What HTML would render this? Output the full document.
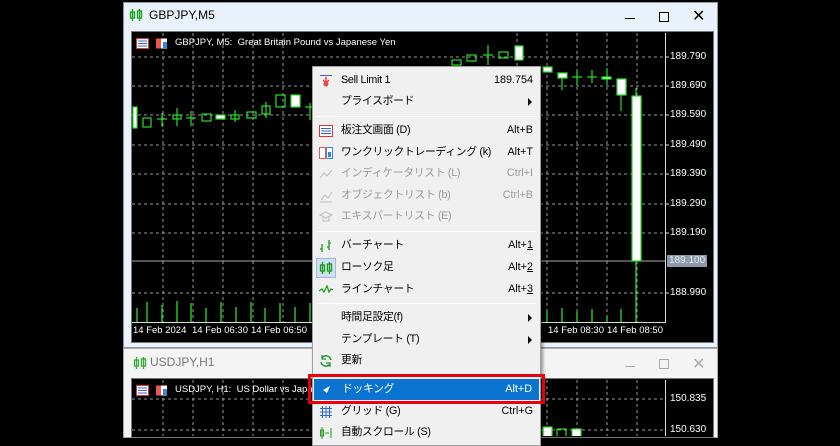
<!DOCTYPE html>
<html><head><meta charset="utf-8"><style>
*{margin:0;padding:0;box-sizing:border-box}
html,body{width:840px;height:436px}
body{background:#000;position:relative;overflow:hidden;font-family:"Liberation Sans","Noto Sans CJK JP",sans-serif}
.abs{position:absolute}
.t{position:absolute;font-size:11px;color:#fff;white-space:nowrap}
.menu{position:absolute;left:312px;top:66px;width:229px;height:380px;background:#f0f0f0;border:1px solid #a0a0a0;box-shadow:2px 2px 3px rgba(0,0,0,.4)}
.mi{position:absolute;left:0;width:227px;height:21px;font-size:10.8px;color:#000;line-height:21px;white-space:nowrap}
.mi .l{position:absolute;left:28px;letter-spacing:-0.3px}
.mi .r{position:absolute;right:7px}
.mi.dis{color:#9a9a9a}
.sep{position:absolute;left:4px;width:219px;height:1px;background:#c8c8c8;border-bottom:1px solid #fff}
.arr{position:absolute;right:8px;top:7px;width:0;height:0;border-left:4px solid #000;border-top:4px solid transparent;border-bottom:4px solid transparent}
.ic{position:absolute;left:6px;top:4px}
</style></head><body>
<div class="abs" style="left:123px;top:2px;width:595px;height:346px;background:#e9f2fb;border:1px solid #8a98a8"></div>
<div class="abs" style="left:131px;top:31px;width:583px;height:312px;background:#000;border:1px solid #777"></div>
<svg class="abs" style="left:129px;top:8px" width="14" height="14"><g stroke="#1a9a1a" fill="none" stroke-width="1.3"><rect x="1.5" y="4" width="4" height="6"/><line x1="3.5" y1="1" x2="3.5" y2="13"/><rect x="8.5" y="3" width="4" height="7"/><line x1="10.5" y1="1" x2="10.5" y2="13"/></g></svg>
<div class="t" style="left:149px;top:8px;color:#000;font-size:12px">GBPJPY,M5</div>
<div class="abs" style="left:625px;top:18px;width:10px;height:1px;background:#000"></div>
<div class="abs" style="left:659px;top:12px;width:10px;height:10px;border:1px solid #000"></div>
<div class="t" style="left:692px;top:6px;color:#000;font-size:16px">✕</div>

<svg class="abs" style="left:0;top:0" width="840" height="436">
<g stroke="#999" stroke-dasharray="3,3" stroke-width="1">
<line x1="132" y1="57" x2="665" y2="57"/><line x1="132" y1="86" x2="665" y2="86"/><line x1="132" y1="115" x2="665" y2="115"/><line x1="132" y1="145" x2="665" y2="145"/><line x1="132" y1="174" x2="665" y2="174"/><line x1="132" y1="204" x2="665" y2="204"/><line x1="132" y1="233" x2="665" y2="233"/><line x1="132" y1="293" x2="665" y2="293"/>
<line x1="163" y1="33" x2="163" y2="322"/><line x1="193" y1="33" x2="193" y2="322"/><line x1="223" y1="33" x2="223" y2="322"/><line x1="253" y1="33" x2="253" y2="322"/><line x1="283" y1="33" x2="283" y2="322"/><line x1="517" y1="33" x2="517" y2="322"/><line x1="547" y1="33" x2="547" y2="322"/><line x1="577" y1="33" x2="577" y2="322"/><line x1="607" y1="33" x2="607" y2="322"/><line x1="637" y1="33" x2="637" y2="322"/>
</g>
<line x1="132" y1="261" x2="665" y2="261" stroke="#aaa"/>
<line x1="665.5" y1="33" x2="665.5" y2="323" stroke="#ddd"/>
<line x1="132" y1="322.5" x2="666" y2="322.5" stroke="#ddd"/>
<g stroke="#ddd"><line x1="665" y1="57" x2="669" y2="57"/><line x1="665" y1="86" x2="669" y2="86"/><line x1="665" y1="115" x2="669" y2="115"/><line x1="665" y1="145" x2="669" y2="145"/><line x1="665" y1="174" x2="669" y2="174"/><line x1="665" y1="204" x2="669" y2="204"/><line x1="665" y1="233" x2="669" y2="233"/><line x1="665" y1="293" x2="669" y2="293"/></g>
<g stroke="#2adf2a" stroke-width="1.2" fill="none">
<rect x="133" y="107" width="4" height="21" fill="#fff"/>
<rect x="143" y="118" width="8" height="9"/><line x1="162" y1="113" x2="162" y2="127"/><line x1="157" y1="119" x2="167" y2="119"/>
<line x1="177" y1="108" x2="177" y2="126"/><rect x="173" y="115" width="8" height="4"/>
<line x1="191" y1="111" x2="191" y2="126"/><line x1="186" y1="118" x2="196" y2="118"/>
<rect x="202" y="114" width="9" height="7"/><rect x="216" y="115" width="9" height="4" fill="#fff"/>
<line x1="235" y1="110" x2="235" y2="122"/><rect x="231" y="115" width="8" height="4"/>
<rect x="247" y="112" width="9" height="6"/><line x1="266" y1="102" x2="266" y2="118"/><rect x="262" y="106" width="8" height="8"/>
<rect x="276" y="95" width="9" height="12"/><rect x="291" y="95" width="9" height="12" fill="#fff"/>
<line x1="310" y1="103" x2="310" y2="120"/><line x1="305" y1="107" x2="315" y2="107"/>
<rect x="452" y="60" width="9" height="5"/><rect x="467" y="55" width="9" height="6"/><line x1="488" y1="45" x2="488" y2="65"/><line x1="483" y1="55" x2="493" y2="55"/><rect x="499" y="52" width="9" height="6"/><rect x="515" y="46" width="8" height="14" fill="#fff"/>
<rect x="543" y="67" width="9" height="5" fill="#fff"/><line x1="562" y1="78" x2="562" y2="90"/><rect x="558" y="73" width="9" height="5" fill="#fff"/>
<line x1="577" y1="70" x2="577" y2="85"/><line x1="572" y1="77" x2="582" y2="77"/><line x1="592" y1="70" x2="592" y2="83"/><line x1="587" y1="77" x2="597" y2="77"/>
<line x1="607" y1="68" x2="607" y2="85"/><rect x="602" y="77" width="9" height="2" fill="#fff"/>
<line x1="621" y1="95" x2="621" y2="111"/><rect x="617" y="79" width="9" height="16" fill="#fff"/>
<line x1="636" y1="88" x2="636" y2="96"/><rect x="632" y="96" width="9" height="165" fill="#fff"/>
</g>
<g stroke="#2adf2a" stroke-width="1.3">
<line x1="137" y1="308" x2="137" y2="322"/><line x1="147" y1="302" x2="147" y2="322"/><line x1="162" y1="305" x2="162" y2="322"/><line x1="177" y1="301" x2="177" y2="322"/><line x1="191" y1="303" x2="191" y2="322"/><line x1="206" y1="308" x2="206" y2="322"/><line x1="221" y1="302" x2="221" y2="322"/><line x1="236" y1="307" x2="236" y2="322"/><line x1="251" y1="302" x2="251" y2="322"/><line x1="265" y1="308" x2="265" y2="322"/><line x1="280" y1="303" x2="280" y2="322"/><line x1="295" y1="307" x2="295" y2="322"/><line x1="310" y1="303" x2="310" y2="322"/>
<line x1="547" y1="311" x2="547" y2="322"/><line x1="562" y1="308" x2="562" y2="322"/><line x1="577" y1="312" x2="577" y2="322"/><line x1="592" y1="309" x2="592" y2="322"/><line x1="607" y1="316" x2="607" y2="322"/><line x1="621" y1="309" x2="621" y2="322"/><line x1="636" y1="262" x2="636" y2="322"/>
</g>
</svg>
<div class="t" style="left:670px;top:51px;font-size:10px">189.790</div>
<div class="t" style="left:670px;top:80px;font-size:10px">189.690</div>
<div class="t" style="left:670px;top:109px;font-size:10px">189.590</div>
<div class="t" style="left:670px;top:139px;font-size:10px">189.490</div>
<div class="t" style="left:670px;top:168px;font-size:10px">189.390</div>
<div class="t" style="left:670px;top:198px;font-size:10px">189.290</div>
<div class="t" style="left:670px;top:227px;font-size:10px">189.190</div>
<div class="t" style="left:667px;top:255px;font-size:10px;background:#8a9aaa;color:#e8eef4;padding:0 2px;height:12px;line-height:12px">189.100</div>
<div class="t" style="left:670px;top:287px;font-size:10px">188.990</div>
<div class="t" style="left:133px;top:325px;font-size:9.5px">14 Feb 2024</div>
<div class="t" style="left:192px;top:325px;font-size:9.5px">14 Feb 06:30</div>
<div class="t" style="left:251px;top:325px;font-size:9.5px">14 Feb 06:50</div>
<div class="t" style="left:548px;top:325px;font-size:9.5px">14 Feb 08:30</div>
<div class="t" style="left:607px;top:325px;font-size:9.5px">14 Feb 08:50</div>
<svg class="abs" style="left:136px;top:38px" width="34" height="11"><rect x="0.5" y="0.5" width="12" height="10" fill="#fff" stroke="#d33"/><g stroke="#36c"><line x1="2" y1="3" x2="11" y2="3"/><line x1="2" y1="5.5" x2="11" y2="5.5"/><line x1="2" y1="8" x2="11" y2="8"/></g><rect x="20" y="0.5" width="5" height="10" fill="#e55"/><rect x="25" y="0.5" width="6" height="10" fill="#fff"/><rect x="27" y="4" width="4" height="6" fill="#38d"/></svg>
<div class="t" style="left:175px;top:37px;font-size:9.5px">GBPJPY, M5:&nbsp; Great Britain Pound vs Japanese Yen</div>

<div class="abs" style="left:123px;top:348px;width:595px;height:90px;background:#f4f4f4;border:1px solid #aaa"></div>
<div class="abs" style="left:131px;top:378px;width:583px;height:60px;background:#000;border:1px solid #777"></div>
<svg class="abs" style="left:133px;top:356px" width="14" height="14"><g stroke="#3aaa3a" fill="none" stroke-width="1.3"><rect x="1.5" y="4" width="4" height="6"/><line x1="3.5" y1="1" x2="3.5" y2="13"/><rect x="8.5" y="3" width="4" height="7"/><line x1="10.5" y1="1" x2="10.5" y2="13"/></g></svg>
<div class="t" style="left:150px;top:355px;color:#777;font-size:12px">USDJPY,H1</div>
<div class="abs" style="left:625px;top:366px;width:10px;height:1px;background:#aaa"></div>
<div class="abs" style="left:659px;top:359px;width:10px;height:10px;border:1px solid #aaa"></div>
<div class="t" style="left:692px;top:354px;color:#aaa;font-size:16px">✕</div>
<svg class="abs" style="left:0;top:0" width="840" height="436">
<g stroke="#999" stroke-dasharray="3,3"><line x1="132" y1="399" x2="665" y2="399"/><line x1="132" y1="430" x2="665" y2="430"/><line x1="163" y1="380" x2="163" y2="436"/><line x1="193" y1="380" x2="193" y2="436"/><line x1="223" y1="380" x2="223" y2="436"/><line x1="253" y1="380" x2="253" y2="436"/><line x1="283" y1="380" x2="283" y2="436"/><line x1="547" y1="380" x2="547" y2="436"/><line x1="577" y1="380" x2="577" y2="436"/><line x1="607" y1="380" x2="607" y2="436"/><line x1="637" y1="380" x2="637" y2="436"/></g>
<line x1="665.5" y1="380" x2="665.5" y2="436" stroke="#ddd"/>
<g stroke="#2adf2a" stroke-width="1.2"><rect x="543" y="427" width="9" height="10" fill="#fff"/><rect x="557" y="429" width="9" height="8" fill="none"/><rect x="572" y="429" width="9" height="8" fill="#fff"/></g>
</svg>
<div class="t" style="left:670px;top:393px;font-size:10px">150.835</div>
<div class="t" style="left:670px;top:424px;font-size:10px">150.630</div>
<svg class="abs" style="left:136px;top:385px" width="34" height="11"><rect x="0.5" y="0.5" width="12" height="10" fill="#fff" stroke="#d33"/><g stroke="#36c"><line x1="2" y1="3" x2="11" y2="3"/><line x1="2" y1="5.5" x2="11" y2="5.5"/><line x1="2" y1="8" x2="11" y2="8"/></g><rect x="20" y="0.5" width="5" height="10" fill="#e55"/><rect x="25" y="0.5" width="6" height="10" fill="#fff"/><rect x="27" y="4" width="4" height="6" fill="#38d"/></svg>
<div class="t" style="left:175px;top:384px;font-size:9.5px">USDJPY, H1:&nbsp; US Dollar vs Japan</div>

<div class="menu">
<div class="mi" style="top:3px"><svg class="ic" width="14" height="14"><line x1="1" y1="1.5" x2="13" y2="1.5" stroke="#36c"/><path d="M7 3v5M4 6l3 3 3-3" stroke="#e44" fill="none" stroke-width="1.5"/><circle cx="7" cy="10" r="2.5" fill="#e44"/></svg><span class="l">Sell Limit 1</span><span class="r">189.754</span></div>
<div class="mi" style="top:24px"><span class="l">プライスボード</span><span class="arr"></span></div>
<div class="sep" style="top:49px"></div>
<div class="mi" style="top:53px"><svg class="ic" width="14" height="14"><rect x="0.5" y="1.5" width="13" height="11" fill="#fff" stroke="#d33"/><g stroke="#36c"><line x1="2" y1="4.5" x2="12" y2="4.5"/><line x1="2" y1="7" x2="12" y2="7"/><line x1="2" y1="9.5" x2="12" y2="9.5"/></g></svg><span class="l">板注文画面 (D)</span><span class="r">Alt+B</span></div>
<div class="mi" style="top:75px"><svg class="ic" width="14" height="14"><rect x="0.5" y="1.5" width="6" height="11" fill="#fff" stroke="#e55"/><rect x="7.5" y="1.5" width="6" height="11" fill="#fff" stroke="#38d"/><rect x="9" y="6" width="3" height="5" fill="#38d"/></svg><span class="l">ワンクリックトレーディング (k)</span><span class="r">Alt+T</span></div>
<div class="mi dis" style="top:96px"><svg class="ic" width="14" height="14"><path d="M1 11l4-5 3 3 5-6" stroke="#bbb" fill="none"/></svg><span class="l">インディケータリスト (L)</span><span class="r">Ctrl+I</span></div>
<div class="mi dis" style="top:118px"><svg class="ic" width="14" height="14"><path d="M1 13h12M2 11l4-5 3 3 4-6" stroke="#bbb" fill="none"/></svg><span class="l">オブジェクトリスト (b)</span><span class="r">Ctrl+B</span></div>
<div class="mi dis" style="top:139px"><svg class="ic" width="14" height="14"><path d="M1 5l6-3 6 3-6 3zM4 7v4h6V7" stroke="#bbb" fill="none"/></svg><span class="l">エキスパートリスト (E)</span></div>
<div class="sep" style="top:164px"></div>
<div class="mi" style="top:168px"><svg class="ic" width="14" height="14"><g stroke="#1a9a1a" stroke-width="1.3"><path d="M3 5v8M1 10h2M10 1v10M10 4h2M10 8h-2"/></g></svg><span class="l">バーチャート</span><span class="r">Alt+<u>1</u></span></div>
<div class="mi" style="top:190px"><div class="abs" style="left:3px;top:1px;width:20px;height:20px;background:#cfe0f0;border:1px solid #9bbbd8"></div><svg class="ic" width="14" height="14"><g stroke="#1a9a1a" fill="none" stroke-width="1.3"><rect x="1.5" y="4" width="4" height="6"/><line x1="3.5" y1="1" x2="3.5" y2="13"/><rect x="8.5" y="3" width="4" height="7"/><line x1="10.5" y1="1" x2="10.5" y2="13"/></g></svg><span class="l">ローソク足</span><span class="r">Alt+<u>2</u></span></div>
<div class="mi" style="top:212px"><svg class="ic" width="14" height="14"><path d="M0 8l3-2 2 3 3-6 2 6 2-3 2 1" stroke="#1a9a1a" fill="none" stroke-width="1.2"/></svg><span class="l">ラインチャート</span><span class="r">Alt+<u>3</u></span></div>
<div class="sep" style="top:236px"></div>
<div class="mi" style="top:240px"><span class="l">時間足設定(f)</span><span class="arr"></span></div>
<div class="mi" style="top:262px"><span class="l">テンプレート (T)</span><span class="arr"></span></div>
<div class="mi" style="top:283px"><svg class="ic" width="14" height="14"><path d="M12 6A5 5 0 0 0 3 4M2 8a5 5 0 0 0 9 2" stroke="#2a9a3a" fill="none" stroke-width="1.6"/><path d="M3 1v4h4M11 13V9H7" stroke="#2a9a3a" fill="none" stroke-width="1.3"/></svg><span class="l">更新</span></div>
<div class="sep" style="top:307px"></div>
<div class="mi" style="top:312px;background:#0a74d0;color:#fff;left:1px;width:225px"><svg class="ic" width="14" height="14"><path d="M3 7l7-4-3 7z" fill="#fff"/></svg><span class="l">ドッキング</span><span class="r">Alt+D</span></div>
<div class="mi" style="top:334px"><svg class="ic" width="14" height="14"><g stroke="#2a6ad0"><path d="M1 3.5h12M1 7h12M1 10.5h12M3.5 1v12M7 1v12M10.5 1v12"/></g></svg><span class="l">グリッド (G)</span><span class="r">Ctrl+G</span></div>
<div class="mi" style="top:355px"><svg class="ic" width="14" height="14"><g stroke="#1a9a1a" fill="none"><rect x="1.5" y="4" width="3" height="6"/><line x1="3" y1="1" x2="3" y2="13"/><path d="M6 7h4M12 2v10"/></g></svg><span class="l">自動スクロール (S)</span></div>
</div>
<div class="abs" style="left:308px;top:374px;width:237px;height:30px;border:3px solid #e8000c"></div>
</body></html>
